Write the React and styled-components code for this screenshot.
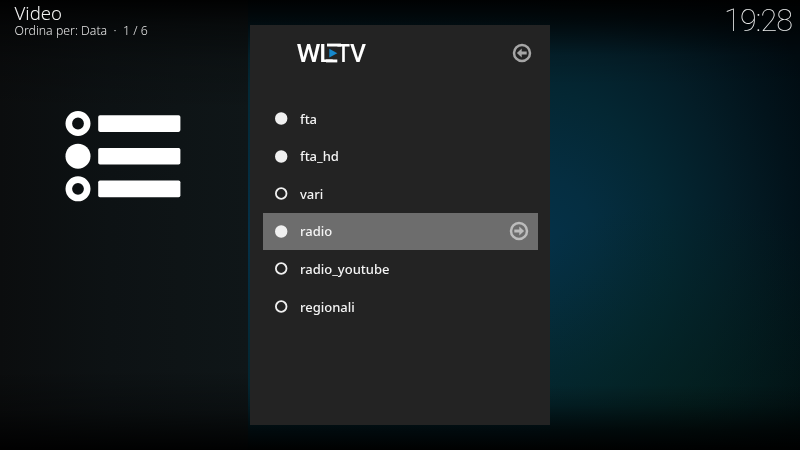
import React from "react";
import styled, { createGlobalStyle } from "styled-components";

const GlobalStyle = createGlobalStyle`
  * { box-sizing: border-box; }
  html, body { margin: 0; background: #000; }
  body { overflow: hidden; }
`;

const Screen = styled.main`
  display: grid;
  grid-template-columns: 250px 300px 250px;
  width: 800px;
  height: 450px;
  overflow: hidden;
  color: #f4f4f4;
  font-family: "Noto Sans", "Open Sans", sans-serif;
  background:
    linear-gradient(180deg, rgba(0, 0, 0, 0.95) 0, rgba(0, 0, 0, 0.7) 20px, rgba(0, 0, 0, 0.12) 55px, transparent 85px, transparent 385px, rgba(0, 0, 0, 0.22) 405px, rgba(0, 0, 0, 0.7) 430px, rgba(0, 0, 0, 0.98) 450px),
    linear-gradient(180deg, #031e29 0, #042936 90px, #053148 235px, #042936 350px, #03212a 450px) 0 0 / 540px 100% no-repeat,
    radial-gradient(ellipse 250px 210px at 690px 410px, rgba(4, 36, 26, 0.5), rgba(4, 36, 26, 0) 100%),
    radial-gradient(ellipse 300px 350px at 540px 240px, #053148 0, #052e41 18%, #042733 42%, #041d27 64%, #02131b 84%, #010c12 100%);
`;

const Sidebar = styled.aside`
  display: flex;
  flex-direction: column;
  width: 248px;
  background:
    linear-gradient(180deg, rgba(0, 0, 0, 0.92) 0, rgba(0, 0, 0, 0.5) 25px, rgba(0, 0, 0, 0.2) 60px, transparent 110px, transparent 370px, rgba(0, 0, 0, 0.3) 410px, rgba(0, 0, 0, 0.95) 450px),
    linear-gradient(90deg, #0b0d0e 0, #0d1214 110px, #0f1618 248px);
`;

const Heading = styled.header`
  height: 111px;
  padding: 3px 0 0 14.5px;
  white-space: nowrap;
  will-change: transform;
`;

const Title = styled.h1`
  margin: 0;
  font-size: 18.6px;
  font-weight: 300;
  line-height: 20px;
`;

const Sorting = styled.p`
  margin: 0;
  color: #e6e6e6;
  font-size: 12.3px;
  font-weight: 300;
  line-height: 16px;
  white-space: pre;
`;

const ListSymbol = styled.svg`
  display: block;
  width: 117px;
  height: 92px;
  margin-left: 65px;
`;

const Dialog = styled.section`
  height: 400px;
  margin-top: 25px;
  padding: 0 12.5px;
  background: #232323;
`;

const DialogHeader = styled.header`
  display: flex;
  align-items: flex-start;
  justify-content: space-between;
  height: 75px;
  padding: 16px 5.5px 0 33.5px;
`;

const Logo = styled.svg`
  display: block;
  width: 72px;
  height: 26px;
  overflow: visible;
  will-change: transform;
`;

const ArrowSvg = styled.svg`
  display: block;
  width: 20px;
  height: 20px;
  flex: none;
  margin-top: ${({ $back }) => ($back ? "2px" : "0")};
  transform: ${({ $back }) => ($back ? "none" : "scaleX(-1)")};
`;

const Options = styled.ul`
  margin: 0;
  padding: 0;
  list-style: none;
`;

const Option = styled.li`
  display: grid;
  grid-template-columns: 13px 1fr 20px;
  align-items: center;
  column-gap: 12px;
  height: 37.55px;
  padding: 0 8.5px 0 12.5px;
  background: ${({ $selected }) => ($selected ? "#6d6d6d" : "transparent")};
`;

const RadioSvg = styled.svg`
  display: block;
  width: 13px;
  height: 13px;
  fill: ${({ $on }) => ($on ? "#f0f0f0" : "none")};
  stroke: #f0f0f0;
  stroke-width: 1.8;
`;

const Label = styled.span`
  font-size: 13px;
  font-weight: 500;
  line-height: 18px;
  will-change: transform;
`;

const ClockArea = styled.aside`
  display: flex;
  justify-content: flex-end;
  align-items: flex-start;
  padding: 3px 8px 0 0;
`;

const Clock = styled.time`
  color: #eceeee;
  font-family: Roboto, sans-serif;
  font-size: 30.5px;
  font-weight: 100;
  line-height: 35px;
  letter-spacing: -0.8px;
  will-change: transform;
`;

const options = [
  { name: "fta", on: true },
  { name: "fta_hd", on: true },
  { name: "vari", on: false },
  { name: "radio", on: true, selected: true },
  { name: "radio_youtube", on: false },
  { name: "regionali", on: false },
];

function Arrow({ back = false }) {
  return (
    <ArrowSvg $back={back} viewBox="0 0 20 20" aria-hidden="true">
      <circle cx="10" cy="10" r="8" fill="none" stroke={back ? "#a6a6a6" : "#bcbcbc"} strokeWidth="2.5" />
      <path d="M4.9 10 9.7 5.4V8.6H14.7V11.4H9.7V14.6Z" fill={back ? "#a6a6a6" : "#bcbcbc"} />
    </ArrowSvg>
  );
}

function Radio({ on }) {
  return (
    <RadioSvg $on={on} viewBox="0 0 13 13" aria-hidden="true">
      <circle cx="6.2" cy="6.5" r="5.3" />
    </RadioSvg>
  );
}

function ListIcon() {
  return (
    <ListSymbol viewBox="0 0 117 92" fill="#fff" aria-hidden="true">
      <circle cx="13" cy="12.5" r="9.2" fill="none" stroke="#fff" strokeWidth="6.6" />
      <circle cx="13" cy="45.2" r="12.5" />
      <circle cx="13" cy="77.8" r="9.2" fill="none" stroke="#fff" strokeWidth="6.6" />
      <rect x="33.2" y="4.2" width="82.2" height="16.7" rx="1.8" />
      <rect x="33.2" y="36.9" width="82.2" height="16.7" rx="1.8" />
      <rect x="33.2" y="69.5" width="82.2" height="16.7" rx="1.8" />
    </ListSymbol>
  );
}

function Brand() {
  return (
    <Logo viewBox="0 0 72 26" fill="#fff" fontFamily="Roboto, sans-serif" fontSize="26.5" fontWeight="500" role="img" aria-label="WLTV">
      <text x="0.5" y="21.4" textLength="24" lengthAdjust="spacingAndGlyphs">W</text>
      <text x="23.2" y="21.4" textLength="14" lengthAdjust="spacingAndGlyphs">L</text>
      <text x="41" y="21.4" textLength="13" lengthAdjust="spacingAndGlyphs">T</text>
      <text x="53.9" y="21.4" textLength="16" lengthAdjust="spacingAndGlyphs">V</text>
      <rect x="30" y="18.5" width="11.3" height="2.9" />
      <rect x="31" y="2.6" width="14" height="2.9" />
      <path d="M33.3 7.7 41.3 12.2 33.3 16.6Z" fill="#1688cc" />
    </Logo>
  );
}

export default function App() {
  return (
    <>
      <GlobalStyle />
      <Screen>
        <Sidebar>
          <Heading>
            <Title>Video</Title>
            <Sorting>{"Ordina per: Data  ·  1 / 6"}</Sorting>
          </Heading>
          <ListIcon />
        </Sidebar>
        <Dialog>
          <DialogHeader>
            <Brand />
            <Arrow back />
          </DialogHeader>
          <Options>
            {options.map(({ name, on, selected }) => (
              <Option key={name} $selected={selected}>
                <Radio on={on} />
                <Label>{name}</Label>
                {selected && <Arrow />}
              </Option>
            ))}
          </Options>
        </Dialog>
        <ClockArea>
          <Clock>19:28</Clock>
        </ClockArea>
      </Screen>
    </>
  );
}
